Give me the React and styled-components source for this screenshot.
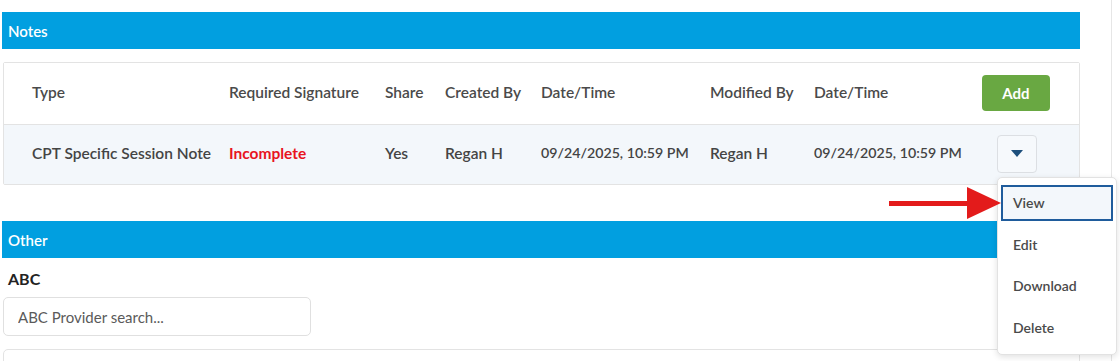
import React from "react";
import styled, { createGlobalStyle } from "styled-components";

const Global = createGlobalStyle`
  html, body { margin: 0; padding: 0; background: #fff; }
  body { font-family: Lato, "Open Sans", Arial, sans-serif; color: #444; }
  * { box-sizing: border-box; }
`;

const Page = styled.div`
  position: relative;
  width: 1120px;
  height: 361px;
  overflow: hidden;
  padding: 12px 0 0 2px;
  &::after {
    content: "";
    position: absolute;
    top: 0;
    bottom: 0;
    left: 1111px;
    width: 1px;
    background: #e6e6e6;
  }
`;

const Column = styled.div`
  width: 1078px;
  display: flex;
  flex-direction: column;
`;

const SectionBar = styled.div`
  height: 37px;
  flex-shrink: 0;
  background: #019fe0;
  color: #fff;
  font-size: 15px;
  font-weight: 600;
  display: flex;
  align-items: center;
  padding-left: 6px;
  margin-top: ${(p) => p.$top || 0}px;
`;

const Card = styled.div`
  margin: 13px 0 0 1px;
  border: 1px solid #e3e3e3;
  border-radius: 2px;
  background: #fff;
`;

const cols = "197px 156px 60px 96px 169px 104px 168px 68px";

const Row = styled.div`
  display: grid;
  grid-template-columns: ${cols};
  align-items: center;
  padding-left: 28px;
  height: ${(p) => p.$h}px;
  padding-bottom: ${(p) => (p.$alt ? 4 : 3)}px;
  background: ${(p) => (p.$alt ? "#f3f7fb" : "#fff")};
  border-top: ${(p) => (p.$alt ? "1px solid #e3e3e3" : "none")};
  font-size: 15.5px;
  font-weight: 600;
  color: ${(p) => (p.$alt ? "#444" : "#4a4a4a")};
`;

const Cell = styled.div`
  white-space: nowrap;
  color: ${(p) => p.$color || "inherit"};
  font-weight: ${(p) => (p.$bold ? 700 : 600)};
  font-size: ${(p) => (p.$num ? "14.2px" : "inherit")};
`;

const ActionCell = styled.div`
  display: flex;
  justify-content: center;
  margin-top: ${(p) => p.$shift || 0}px;
`;

const ToggleWrap = styled.div`
  position: relative;
  margin-left: 2px;
`;

const AddButton = styled.button`
  width: 68px;
  height: 36px;
  border: none;
  border-radius: 4px;
  background: #69a842;
  color: #fff;
  font-family: inherit;
  font-size: 15px;
  font-weight: 700;
`;

const Toggle = styled.button`
  width: 40px;
  height: 38px;
  border: 1px solid #dcdfe3;
  border-radius: 4px;
  background: #f6f9fc;
  display: flex;
  align-items: center;
  justify-content: center;
  padding: 0;
`;

const Menu = styled.div`
  position: absolute;
  top: calc(100% + 4px);
  left: 0;
  width: 120px;
  height: 178px;
  background: #fff;
  border: 1px solid #e2e2e2;
  border-radius: 5px;
  box-shadow: 0 2px 6px rgba(0, 0, 0, 0.12);
  padding: 7px 3px;
  display: flex;
  flex-direction: column;
  gap: 5.5px;
  z-index: 2;
`;

const MenuItem = styled.div`
  height: 36px;
  flex-shrink: 0;
  display: flex;
  align-items: center;
  padding: 0 0 1px 10px;
  font-size: 14px;
  font-weight: 600;
  color: #4a4a4a;
  border: 2px solid ${(p) => (p.$active ? "#1f5c9c" : "transparent")};
  background: ${(p) => (p.$active ? "#f3f7fb" : "transparent")};
`;

const Arrow = styled.svg`
  position: absolute;
  top: 8px;
  right: calc(100% - 3px);
`;

const FieldLabel = styled.div`
  margin: 11px 0 0 6px;
  font-size: 16px;
  font-weight: 700;
  color: #222;
`;

const Input = styled.input`
  margin: 9px 0 0 1px;
  width: 308px;
  height: 39px;
  border: 1px solid #e0e0e0;
  border-radius: 5px;
  padding: 0 14px;
  font-family: inherit;
  font-size: 15px;
  font-weight: 400;
  &::placeholder { color: #5a5a5a; }
`;

const NextBox = styled.div`
  margin: 13px 0 0 1px;
  height: 30px;
  border: 1px solid #e3e3e3;
  border-radius: 5px;
`;

export default function App() {
  return (
    <Page>
      <Global />
      <Column>
        <SectionBar>Notes</SectionBar>
        <Card>
          <Row $h={61}>
            <Cell>Type</Cell>
            <Cell>Required Signature</Cell>
            <Cell>Share</Cell>
            <Cell>Created By</Cell>
            <Cell>Date/Time</Cell>
            <Cell>Modified By</Cell>
            <Cell>Date/Time</Cell>
            <ActionCell $shift={2}>
              <AddButton>Add</AddButton>
            </ActionCell>
          </Row>
          <Row $h={60} $alt>
            <Cell>CPT Specific Session Note</Cell>
            <Cell $color="#e8141e" $bold>Incomplete</Cell>
            <Cell>Yes</Cell>
            <Cell>Regan H</Cell>
            <Cell $num>09/24/2025, 10:59 PM</Cell>
            <Cell>Regan H</Cell>
            <Cell $num>09/24/2025, 10:59 PM</Cell>
            <ActionCell $shift={3}>
              <ToggleWrap>
                <Toggle>
                  <svg width="12" height="8" viewBox="0 0 12 8">
                    <path d="M0 0 L12 0 L6 7 Z" fill="#1d4f7c" />
                  </svg>
                </Toggle>
                <Menu>
                  <Arrow width="112" height="34" viewBox="0 0 112 34">
                    <rect x="0" y="15" width="80" height="5" fill="#e31b1b" />
                    <path d="M78 1 L112 17 L78 33 Z" fill="#e31b1b" />
                  </Arrow>
                  <MenuItem $active>View</MenuItem>
                  <MenuItem>Edit</MenuItem>
                  <MenuItem>Download</MenuItem>
                  <MenuItem>Delete</MenuItem>
                </Menu>
              </ToggleWrap>
            </ActionCell>
          </Row>
        </Card>
        <SectionBar $top={36}>Other</SectionBar>
        <FieldLabel>ABC</FieldLabel>
        <Input placeholder="ABC Provider search..." />
        <NextBox />
      </Column>
    </Page>
  );
}
